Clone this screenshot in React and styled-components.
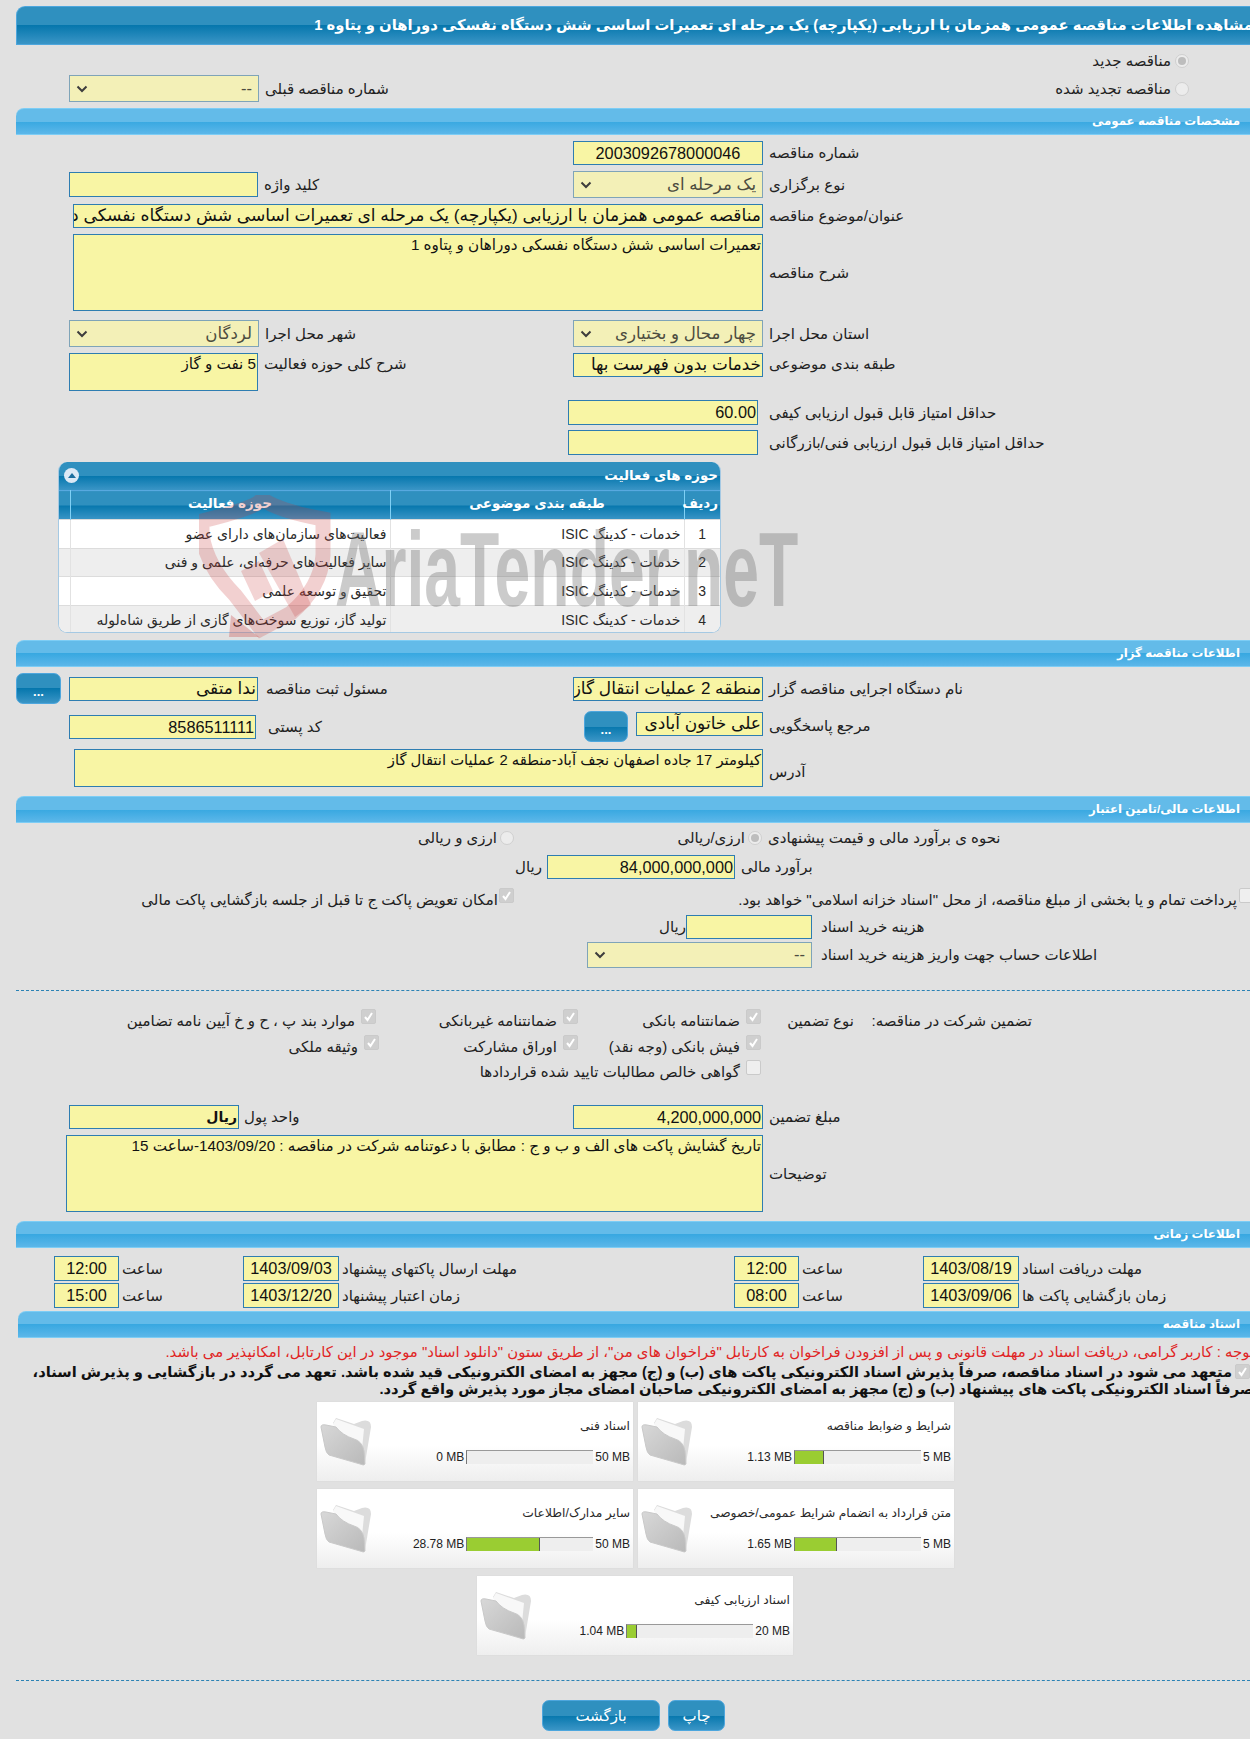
import React from "react";
import styled, { createGlobalStyle } from "styled-components";

const Global = createGlobalStyle`
  html, body { margin: 0; padding: 0; background: #e1e1e1; }
  * { box-sizing: border-box; }
`;

const STACK = `"Liberation Sans", "DejaVu Sans", sans-serif`;
const DARK = `linear-gradient(#2f90bf 0, #2f90bf 50%, #0677ad 50%, #3a95c6 100%)`;
const LIGHT = `linear-gradient(#63bbe9 0, #63bbe9 50%, #38a8e1 50%, #5cb7e9 100%)`;

const Page = styled.div`
  position: relative;
  width: 1250px;
  height: 1739px;
  overflow: hidden;
  padding-top: 6px;
  direction: ltr;
  font-family: ${STACK};
  font-size: 13px;
  color: #222;
`;

const TitleBar = styled.div`
  margin-left: 16px;
  height: 39px;
  background: ${DARK};
  border: 1px solid #4da6dd;
  border-right: 0;
  border-radius: 9px 0 0 0;
  display: flex;
  justify-content: flex-end;
  align-items: center;
  padding-bottom: 2px;
  overflow: hidden;
`;
const TitleText = styled.h1`
  margin: 0 -3px 0 0;
  white-space: nowrap;
  direction: rtl;
  font-size: 14.8px;
  font-weight: bold;
  color: #fff;
`;

const SectionBar = styled.div`
  margin-top: ${(p) => p.$mt}px;
  margin-left: ${(p) => p.$ml || 16}px;
  height: 27px;
  background: ${LIGHT};
  border-top: 1px solid #7dcdf5;
  border-bottom: 1px solid #7dcdf5;
  border-radius: 8px 0 0 0;
  display: flex;
  justify-content: flex-end;
  align-items: center;
  padding: 0 10px 2px 0;
`;
const SectionTitle = styled.h2`
  margin: 0;
  direction: rtl;
  font-size: 11.8px;
  font-weight: bold;
  color: #fff;
  white-space: nowrap;
`;

const Row = styled.div`
  display: grid;
  grid-template-columns: ${(p) => p.$cols || "573px 1fr"};
  height: ${(p) => p.$h}px;
  margin-top: ${(p) => p.$mt || 0}px;
  padding-left: ${(p) => p.$pl || 0}px;
`;
const Cell = styled.div`
  display: flex;
  min-width: 0;
  align-items: ${(p) => p.$align || "center"};
  justify-content: ${(p) => (p.$end ? "flex-end" : "flex-start")};
  gap: ${(p) => (p.$gap === undefined ? 6 : p.$gap)}px;
  padding-left: ${(p) => p.$pl || 0}px;
  padding-right: ${(p) => p.$pr || 0}px;
`;

const Label = styled.span`
  direction: rtl;
  white-space: nowrap;
  color: #222;
  font-size: 15px;
  line-height: 18px;
  margin-top: ${(p) => p.$mt || 0}px;
`;

const Field = styled.div`
  flex: none;
  width: ${(p) => p.$w}px;
  height: ${(p) => p.$h || 24}px;
  margin-top: ${(p) => p.$mt || 0}px;
  margin-left: ${(p) => p.$ml || 0}px;
  background: #f8f5a4;
  border: 1px solid #2e7db1;
  direction: rtl;
  text-align: ${(p) => p.$ta || "right"};
  white-space: nowrap;
  overflow: hidden;
  color: #111;
  font-size: ${(p) => p.$fs || 16.3}px;
  font-weight: ${(p) => (p.$bold ? "bold" : "normal")};
  line-height: ${(p) => (p.$h || 24) - 2}px;
  padding: 0 1px;
`;
const AreaField = styled(Field)`
  white-space: normal;
  font-size: ${(p) => p.$fs || 15.2}px;
  line-height: 18px;
  padding-top: 1px;
`;
const SelectBox = styled.div`
  flex: none;
  width: ${(p) => p.$w}px;
  height: ${(p) => p.$h || 27}px;
  background: #f3f0b7;
  border: 1px solid #7fa4b8;
  display: flex;
  align-items: center;
  justify-content: space-between;
  padding: 0 6px 0 6px;
  color: #4c4c40;
  font-size: ${(p) => p.$fs || 16.6}px;
`;
const SelectText = styled.span`
  direction: rtl;
  white-space: nowrap;
`;
const Chevron = () => (
  <svg width="12" height="8" viewBox="0 0 12 8">
    <path d="M1.5 1.5 L6 6 L10.5 1.5" fill="none" stroke="#3d3d3d" strokeWidth="2" />
  </svg>
);

const Radio = styled.span`
  flex: none;
  display: inline-flex;
  align-items: center;
  justify-content: center;
  width: 14px;
  height: 14px;
  border-radius: 50%;
  background: #ececec;
  border: 1px solid #cfcfcf;
  &::after {
    content: "";
    width: 8px;
    height: 8px;
    border-radius: 50%;
    background: ${(p) => (p.$on ? "#bdbdbd" : "transparent")};
  }
`;
const CheckBox = styled.span`
  flex: none;
  display: inline-flex;
  width: 15px;
  height: 15px;
  border-radius: 2px;
  align-self: flex-start;
  background: ${(p) => (p.$on ? "#cfcfcf" : "#efefef")};
  border: 1px solid #cacaca;
  margin-top: ${(p) => p.$mt || 0}px;
`;
const Check = ({ on }) => (
  <CheckBox $on={on}>
    {on && (
      <svg width="13" height="13" viewBox="0 0 13 13">
        <path d="M3 7 L5.5 10 L10 3" fill="none" stroke="#fff" strokeWidth="2" />
      </svg>
    )}
  </CheckBox>
);

const DotsButton = styled.button`
  flex: none;
  width: ${(p) => p.$w}px;
  height: 31px;
  border-radius: 7px;
  border: 1px solid #4da6dd;
  background: ${DARK};
  color: #fff;
  font: bold 13px ${STACK};
  padding: 6px 0 0;
`;

const Panel = styled.section`
  margin: 7px 0 0 58px;
  width: 663px;
  height: 171px;
  border: 1px solid #a5c9e3;
  border-top: 0;
  border-radius: 9px;
  overflow: hidden;
  background: #fff;
`;
const PanelHead = styled.div`
  height: 28px;
  background: ${DARK};
  display: flex;
  align-items: center;
  justify-content: space-between;
  padding: 0 2px 2px 5px;
`;
const Toggle = styled.span`
  width: 15px;
  height: 15px;
  border-radius: 50%;
  background: #dce9f5;
  display: flex;
  align-items: center;
  justify-content: center;
  &::after {
    content: "";
    border: 4px solid transparent;
    border-top: 0;
    border-bottom: 5px solid #1d6e9e;
    width: 0;
  }
`;
const PanelTitle = styled.h3`
  margin: 0;
  direction: rtl;
  font-size: 13.4px;
  font-weight: bold;
  color: #fff;
`;
const Table = styled.table`
  width: 100%;
  table-layout: fixed;
  border-collapse: collapse;
  direction: rtl;
`;
const Th = styled.th`
  height: 29px;
  padding: 0 2px 4px;
  background: ${DARK};
  border-top: 1px solid #58a9e0;
  border-left: 1px solid #7fd0f5;
  color: #fff;
  font-size: 13.5px;
  font-weight: bold;
  &:last-child { border-left: 0; }
`;
const Tr = styled.tr`
  background: ${(p) => (p.$alt ? "#eeeeee" : "#fff")};
`;
const Td = styled.td`
  height: 28.5px;
  padding: 0 3px;
  border-top: 1px solid #dcdcdc;
  border-left: 1px solid #e2e2e2;
  color: #2a2a2a;
  font-size: 14px;
  text-align: ${(p) => p.$ta || "right"};
  white-space: nowrap;
  overflow: hidden;
  &:last-child { border-left: 0; }
`;

const Watermark = styled.div`
  position: absolute;
  left: 199px;
  top: 495px;
  width: 610px;
  height: 146px;
  pointer-events: none;
`;
const WatermarkText = styled.span`
  position: absolute;
  left: 136px;
  top: 22px;
  font: bold 100px "Liberation Sans", sans-serif;
  line-height: 100px;
  color: rgba(110, 110, 110, 0.36);
  white-space: nowrap;
  transform-origin: 0 0;
  transform: scale(0.643, 1.05);
  direction: ltr;
`;
const WatermarkLogo = styled.svg`
  position: absolute;
  left: 0;
  top: 0;
`;

const Dashed = styled.hr`
  margin: ${(p) => p.$mt}px 0 0 16px;
  border: 0;
  border-top: 1px dashed #2b82b5;
  height: 0;
`;

const NoticeRow = styled.div`
  margin-top: ${(p) => p.$mt || 0}px;
  width: ${(p) => p.$w}px;
  display: flex;
  justify-content: flex-end;
  align-items: flex-start;
  gap: 3px;
  height: ${(p) => p.$h}px;
`;
const Notice = styled.p`
  margin: 0;
  direction: rtl;
  white-space: nowrap;
  color: ${(p) => (p.$red ? "#e02424" : "#111")};
  font-size: ${(p) => (p.$red ? 14.9 : 14.7)}px;
  font-weight: ${(p) => (p.$red ? "normal" : "bold")};
  line-height: ${(p) => p.$h}px;
`;

const CardRow = styled.div`
  display: flex;
  gap: 5px;
  padding-left: ${(p) => p.$pl}px;
  margin-top: ${(p) => p.$mt}px;
`;
const Card = styled.article`
  width: 316px;
  height: 79px;
  background: linear-gradient(#fff 0, #fff 55%, #eeeeee 100%);
  box-shadow: 0 0 1px #cfcfcf;
  display: flex;
  padding: 0 3px 0 3px;
`;
const CardBody = styled.div`
  flex: 1;
  min-width: 0;
`;
const CardTitle = styled.div`
  direction: rtl;
  white-space: nowrap;
  margin-top: 16px;
  height: 16px;
  line-height: 16px;
  font-size: 12.3px;
  color: #2a2a2a;
`;
const Usage = styled.div`
  margin-top: 16px;
  display: flex;
  justify-content: flex-end;
  align-items: center;
  gap: 2px;
  height: 14px;
  font-size: 12px;
  color: #222;
`;
const Bar = styled.div`
  width: 127px;
  height: 14px;
  background: #eeeeee;
  border-top: 1px solid #999;
  border-left: 1px solid #777;
`;
const BarFill = styled.div`
  height: 100%;
  background: #9acd32;
  border-right: 1px solid #555;
`;

const Buttons = styled.div`
  display: flex;
  gap: 8px;
  margin-top: 19px;
  padding-left: 542px;
`;
const ActionButton = styled.button`
  width: ${(p) => p.$w}px;
  height: 31px;
  border-radius: 7px;
  border: 1px solid #4da6dd;
  background: ${DARK};
  color: #fff;
  font: 15px ${STACK};
  direction: rtl;
`;

const FolderIcon = styled.svg`
  flex: none;
  margin-top: 15px;
`;
const Folder = () => (
  <FolderIcon width="54" height="50" viewBox="0 0 54 50">
    <defs>
      <linearGradient id="fl" x1="0" y1="0" x2="1" y2="1">
        <stop offset="0" stopColor="#d8d8d8" />
        <stop offset="1" stopColor="#b9b9b9" />
      </linearGradient>
    </defs>
    <path d="M13 6 L16 1 L34 7 L42 4 Q51 2 51 10 L45 46 L38 42 Z" fill="#dcdcdc" />
    <path d="M13 7 L16 2 L44 12 L42 32 L20 24 Z" fill="#f8f8f8" />
    <path d="M1 10 Q1 7 6 8 L16 10 Q22 18 34 22 Q42 24 44 34 L45 47 Q44 49 40 47 L9 38 Q6 36 5 30 Z" fill="url(#fl)" stroke="#c9c9c9" strokeWidth="1" />
  </FolderIcon>
);

const rows = [
  ["1", "فعالیت‌های سازمان‌های دارای عضو"],
  ["2", "سایر فعالیت‌های حرفه‌ای، علمی و فنی"],
  ["3", "تحقیق و توسعه علمی"],
  ["4", "تولید گاز، توزیع سوخت‌های گازی از طریق شاه‌لوله"],
];

const DocCard = ({ title, value, max, pct }) => (
  <Card>
    <Folder />
    <CardBody>
      <CardTitle>{title}</CardTitle>
      <Usage>
        <span>{value}</span>
        <Bar>{pct > 0 && <BarFill style={{ width: `${pct}%` }} />}</Bar>
        <span>{max}</span>
      </Usage>
    </CardBody>
  </Card>
);

export default function App() {
  return (
    <Page>
      <Global />
      <TitleBar>
        <TitleText>مشاهده اطلاعات مناقصه عمومی همزمان با ارزیابی (یکپارچه) یک مرحله ای تعمیرات اساسی شش دستگاه نفسکی دوراهان و پتاوه 1</TitleText>
      </TitleBar>

      <Row $mt={7} $h={14} $cols="1189px">
        <Cell $end $gap={4}>
          <Label>مناقصه جدید</Label>
          <Radio $on />
        </Cell>
      </Row>
      <Row $mt={9} $h={27} $cols="573px 616px">
        <Cell $pl={69}>
          <SelectBox $w={190}>
            <Chevron />
            <SelectText>--</SelectText>
          </SelectBox>
          <Label>شماره مناقصه قبلی</Label>
        </Cell>
        <Cell $end $gap={4}>
          <Label>مناقصه تجدید شده</Label>
          <Radio />
        </Cell>
      </Row>

      <SectionBar $mt={6}><SectionTitle>مشخصات مناقصه عمومی</SectionTitle></SectionBar>

      <Row $mt={6} $h={24}>
        <Cell />
        <Cell>
          <Field $w={190} $ta="center">2003092678000046</Field>
          <Label>شماره مناقصه</Label>
        </Cell>
      </Row>
      <Row $mt={6} $h={27}>
        <Cell $pl={69}>
          <Field $w={189} $h={25} />
          <Label>کلید واژه</Label>
        </Cell>
        <Cell>
          <SelectBox $w={190}>
            <Chevron />
            <SelectText>یک مرحله ای</SelectText>
          </SelectBox>
          <Label>نوع برگزاری</Label>
        </Cell>
      </Row>
      <Row $mt={6} $h={24} $cols="73px 1fr">
        <Cell />
        <Cell>
          <Field $w={690} $fs={17.1}>مناقصه عمومی همزمان با ارزیابی (یکپارچه) یک مرحله ای تعمیرات اساسی شش دستگاه نفسکی دوراهان و پتاوه 1</Field>
          <Label>عنوان/موضوع مناقصه</Label>
        </Cell>
      </Row>
      <Row $mt={6} $h={77} $cols="73px 1fr">
        <Cell />
        <Cell>
          <AreaField $w={690} $h={77}>تعمیرات اساسی شش دستگاه نفسکی دوراهان و پتاوه 1</AreaField>
          <Label>شرح مناقصه</Label>
        </Cell>
      </Row>
      <Row $mt={9} $h={27}>
        <Cell $pl={69}>
          <SelectBox $w={190}>
            <Chevron />
            <SelectText>لردگان</SelectText>
          </SelectBox>
          <Label>شهر محل اجرا</Label>
        </Cell>
        <Cell>
          <SelectBox $w={190}>
            <Chevron />
            <SelectText>چهار محال و بختیاری</SelectText>
          </SelectBox>
          <Label>استان محل اجرا</Label>
        </Cell>
      </Row>
      <Row $mt={6} $h={38}>
        <Cell $pl={69} $align="flex-start">
          <AreaField $w={189} $h={38}>5 نفت و گاز</AreaField>
          <Label $mt={2}>شرح کلی حوزه فعالیت</Label>
        </Cell>
        <Cell $align="flex-start">
          <Field $w={190} $fs={16.8}>خدمات بدون فهرست بها</Field>
          <Label $mt={2}>طبقه بندی موضوعی</Label>
        </Cell>
      </Row>
      <Row $mt={9} $h={25} $cols="568px 1fr">
        <Cell />
        <Cell $gap={11}>
          <Field $w={190} $h={25}>60.00</Field>
          <Label>حداقل امتیاز قابل قبول ارزیابی کیفی</Label>
        </Cell>
      </Row>
      <Row $mt={5} $h={25} $cols="568px 1fr">
        <Cell />
        <Cell $gap={11}>
          <Field $w={190} $h={25} />
          <Label>حداقل امتیاز قابل قبول ارزیابی فنی/بازرگانی</Label>
        </Cell>
      </Row>

      <Panel>
        <PanelHead>
          <Toggle />
          <PanelTitle>حوزه های فعالیت</PanelTitle>
        </PanelHead>
        <Table>
          <colgroup>
            <col style={{ width: 36 }} />
            <col style={{ width: 294 }} />
            <col style={{ width: 320 }} />
            <col />
          </colgroup>
          <thead>
            <tr>
              <Th>ردیف</Th>
              <Th>طبقه بندی موضوعی</Th>
              <Th>حوزه فعالیت</Th>
              <Th />
            </tr>
          </thead>
          <tbody>
            {rows.map(([n, text], i) => (
              <Tr key={n} $alt={i % 2 === 1}>
                <Td $ta="center">{n}</Td>
                <Td>خدمات - کدینگ ISIC</Td>
                <Td>{text}</Td>
                <Td />
              </Tr>
            ))}
          </tbody>
        </Table>
      </Panel>

      <SectionBar $mt={7}><SectionTitle>اطلاعات مناقصه گزار</SectionTitle></SectionBar>

      <Row $mt={6} $h={31}>
        <Cell $pl={16} $gap={8}>
          <DotsButton $w={45}>...</DotsButton>
          <Field $w={189} $fs={17}>ندا متقی</Field>
          <Label>مسئول ثبت مناقصه</Label>
        </Cell>
        <Cell>
          <Field $w={190} $fs={17}>منطقه 2 عملیات انتقال گاز</Field>
          <Label>نام دستگاه اجرایی مناقصه گزار</Label>
        </Cell>
      </Row>
      <Row $mt={7} $h={31}>
        <Cell $pl={69} $gap={12} $align="flex-start">
          <Field $w={187} $mt={4}>8586511111</Field>
          <Label $mt={7}>کد پستی</Label>
        </Cell>
        <Cell $pl={11} $gap={6} $align="flex-start">
          <DotsButton $w={44}>...</DotsButton>
          <Field $w={127} $mt={1} $ml={2} $fs={17}>علی خاتون آبادی</Field>
          <Label $mt={6}>مرجع پاسخگویی</Label>
        </Cell>
      </Row>
      <Row $mt={7} $h={38} $cols="74px 1fr">
        <Cell />
        <Cell>
          <AreaField $w={689} $h={38} $fs={14.8}>کیلومتر 17 جاده اصفهان نجف آباد-منطقه 2 عملیات انتقال گاز</AreaField>
          <Label $mt={8}>آدرس</Label>
        </Cell>
      </Row>

      <SectionBar $mt={9}><SectionTitle>اطلاعات مالی/تامین اعتبار</SectionTitle></SectionBar>

      <Row $mt={6} $h={18} $cols="514px 248px 1fr">
        <Cell $end $gap={3}>
          <Label>ارزی و ریالی</Label>
          <Radio />
        </Cell>
        <Cell $end $gap={3}>
          <Label>ارزی/ریالی</Label>
          <Radio $on />
        </Cell>
        <Cell $pl={6}>
          <Label>نحوه ی برآورد مالی و قیمت پیشنهادی</Label>
        </Cell>
      </Row>
      <Row $mt={8} $h={24} $cols="547px 1fr">
        <Cell $end $pr={5}>
          <Label>ریال</Label>
        </Cell>
        <Cell>
          <Field $w={188}>84,000,000,000</Field>
          <Label>برآورد مالی</Label>
        </Cell>
      </Row>
      <Row $mt={9} $h={20} $cols="514px 740px">
        <Cell $end $gap={1} $align="flex-start">
          <Label $mt={3}>امکان تعویض پاکت ج تا قبل از جلسه بازگشایی پاکت مالی</Label>
          <Check on />
        </Cell>
        <Cell $end $gap={2} $align="flex-start">
          <Label $mt={3}>پرداخت تمام و یا بخشی از مبلغ مناقصه، از محل "اسناد خزانه اسلامی" خواهد بود.</Label>
          <Check />
        </Cell>
      </Row>
      <Row $mt={7} $h={24} $cols="686px 1fr">
        <Cell $end>
          <Label>ریال</Label>
        </Cell>
        <Cell $gap={9}>
          <Field $w={126} />
          <Label>هزینه خرید اسناد</Label>
        </Cell>
      </Row>
      <Row $mt={3} $h={26} $cols="587px 1fr">
        <Cell />
        <Cell $gap={9}>
          <SelectBox $w={225} $h={26}>
            <Chevron />
            <SelectText>--</SelectText>
          </SelectBox>
          <Label>اطلاعات حساب جهت واریز هزینه خرید اسناد</Label>
        </Cell>
      </Row>

      <Dashed $mt={22} />

      <Row $mt={18} $h={20} $cols="376px 202px 183px 93px 178px">
        <Cell $end $gap={6} $align="flex-start">
          <Label $mt={3}>موارد بند پ ، ح و خ آیین نامه تضامین</Label>
          <Check on />
        </Cell>
        <Cell $end $gap={6} $align="flex-start">
          <Label $mt={3}>ضمانتنامه غیربانکی</Label>
          <Check on />
        </Cell>
        <Cell $end $gap={6} $align="flex-start">
          <Label $mt={3}>ضمانتنامه بانکی</Label>
          <Check on />
        </Cell>
        <Cell $end $align="flex-start">
          <Label $mt={3}>نوع تضمین</Label>
        </Cell>
        <Cell $end $align="flex-start">
          <Label $mt={3}>تضمین شرکت در مناقصه:</Label>
        </Cell>
      </Row>
      <Row $mt={6} $h={20} $cols="379px 199px 183px">
        <Cell $end $gap={6} $align="flex-start">
          <Label $mt={3}>وثیقه ملکی</Label>
          <Check on />
        </Cell>
        <Cell $end $gap={6} $align="flex-start">
          <Label $mt={3}>اوراق مشارکت</Label>
          <Check on />
        </Cell>
        <Cell $end $gap={6} $align="flex-start">
          <Label $mt={3}>فیش بانکی (وجه نقد)</Label>
          <Check on />
        </Cell>
      </Row>
      <Row $mt={5} $h={20} $cols="761px">
        <Cell $end $gap={6} $align="flex-start">
          <Label $mt={3}>گواهی خالص مطالبات تایید شده قراردادها</Label>
          <Check />
        </Cell>
      </Row>

      <Row $mt={25} $h={24}>
        <Cell $pl={69} $gap={5}>
          <Field $w={170} $fs={14} $bold>ریال</Field>
          <Label>واحد پول</Label>
        </Cell>
        <Cell>
          <Field $w={190}>4,200,000,000</Field>
          <Label>مبلغ تضمین</Label>
        </Cell>
      </Row>
      <Row $mt={6} $h={77} $cols="66px 1fr">
        <Cell />
        <Cell>
          <AreaField $w={697} $h={77}>تاریخ گشایش پاکت های الف و ب و ج : مطابق با دعوتنامه شرکت در مناقصه : 1403/09/20-ساعت 15</AreaField>
          <Label>توضیحات</Label>
        </Cell>
      </Row>

      <SectionBar $mt={9}><SectionTitle>اطلاعات زمانی</SectionTitle></SectionBar>

      <Row $mt={8} $h={25} $pl={54} $cols="189px 491px 189px 1fr">
        <Cell $gap={3}>
          <Field $w={65} $h={25} $ta="center">12:00</Field>
          <Label>ساعت</Label>
        </Cell>
        <Cell $gap={3}>
          <Field $w={96} $h={25} $ta="center">1403/09/03</Field>
          <Label>مهلت ارسال پاکتهای پیشنهاد</Label>
        </Cell>
        <Cell $gap={3}>
          <Field $w={65} $h={25} $ta="center">12:00</Field>
          <Label>ساعت</Label>
        </Cell>
        <Cell $gap={3}>
          <Field $w={96} $h={25} $ta="center">1403/08/19</Field>
          <Label>مهلت دریافت اسناد</Label>
        </Cell>
      </Row>
      <Row $mt={2} $h={25} $pl={54} $cols="189px 491px 189px 1fr">
        <Cell $gap={3}>
          <Field $w={65} $h={25} $ta="center">15:00</Field>
          <Label>ساعت</Label>
        </Cell>
        <Cell $gap={3}>
          <Field $w={96} $h={25} $ta="center">1403/12/20</Field>
          <Label>زمان اعتبار پیشنهاد</Label>
        </Cell>
        <Cell $gap={3}>
          <Field $w={65} $h={25} $ta="center">08:00</Field>
          <Label>ساعت</Label>
        </Cell>
        <Cell $gap={3}>
          <Field $w={96} $h={25} $ta="center">1403/09/06</Field>
          <Label>زمان بازگشایی پاکت ها</Label>
        </Cell>
      </Row>

      <SectionBar $mt={3} $ml={18}><SectionTitle>اسناد مناقصه</SectionTitle></SectionBar>

      <NoticeRow $mt={5} $w={1254} $h={18}>
        <Notice $red $h={18}>توجه : کاربر گرامی، دریافت اسناد در مهلت قانونی و پس از افزودن فراخوان به کارتابل "فراخوان های من"، از طریق ستون "دانلود اسناد" موجود در این کارتابل، امکانپذیر می باشد.</Notice>
      </NoticeRow>
      <NoticeRow $mt={3} $w={1250} $h={17}>
        <Notice $h={17}>متعهد می شود در اسناد مناقصه، صرفاً پذیرش اسناد الکترونیکی پاکت های (ب) و (ج) مجهز به امضای الکترونیکی قید شده باشد. تعهد می گردد در بازگشایی و پذیرش اسناد،</Notice>
        <Check on />
      </NoticeRow>
      <NoticeRow $w={1254} $h={16}>
        <Notice $h={16}>صرفاً اسناد الکترونیکی پاکت های پیشنهاد (ب) و (ج) مجهز به امضای الکترونیکی صاحبان امضای مجاز مورد پذیرش واقع گردد.</Notice>
      </NoticeRow>

      <CardRow $pl={317} $mt={5}>
        <DocCard title="اسناد فنی" value="0 MB" max="50 MB" pct={0} />
        <DocCard title="شرایط و ضوابط مناقصه" value="1.13 MB" max="5 MB" pct={23} />
      </CardRow>
      <CardRow $pl={317} $mt={8}>
        <DocCard title="سایر مدارک/اطلاعات" value="28.78 MB" max="50 MB" pct={58} />
        <DocCard title="متن قرارداد به انضمام شرایط عمومی/خصوصی" value="1.65 MB" max="5 MB" pct={33} />
      </CardRow>
      <CardRow $pl={477} $mt={8}>
        <DocCard title="اسناد ارزیابی کیفی" value="1.04 MB" max="20 MB" pct={7.5} />
      </CardRow>

      <Dashed $mt={25} />

      <Buttons>
        <ActionButton $w={118}>بازگشت</ActionButton>
        <ActionButton $w={57}>چاپ</ActionButton>
      </Buttons>

      <Watermark>
        <WatermarkLogo width="135" height="146" viewBox="0 0 135 146">
          <path d="M3 26 Q60 12 63 4 Q80 16 124 24 L124 60 Q122 92 92 118 L62 134 L36 100 Q8 72 3 40 Z" fill="none" stroke="rgba(200,60,60,0.24)" strokeWidth="15" />
          <path d="M60 58 L84 44 L112 110 L96 122 Z" fill="rgba(200,60,60,0.22)" />
          <path d="M42 76 L60 66 L74 96 L56 106 Z" fill="rgba(200,60,60,0.22)" />
          <path d="M32 120 L60 142 L30 142 Z" fill="rgba(200,60,60,0.3)" />
        </WatermarkLogo>
        <WatermarkText>AriaTender.neT</WatermarkText>
      </Watermark>
    </Page>
  );
}
